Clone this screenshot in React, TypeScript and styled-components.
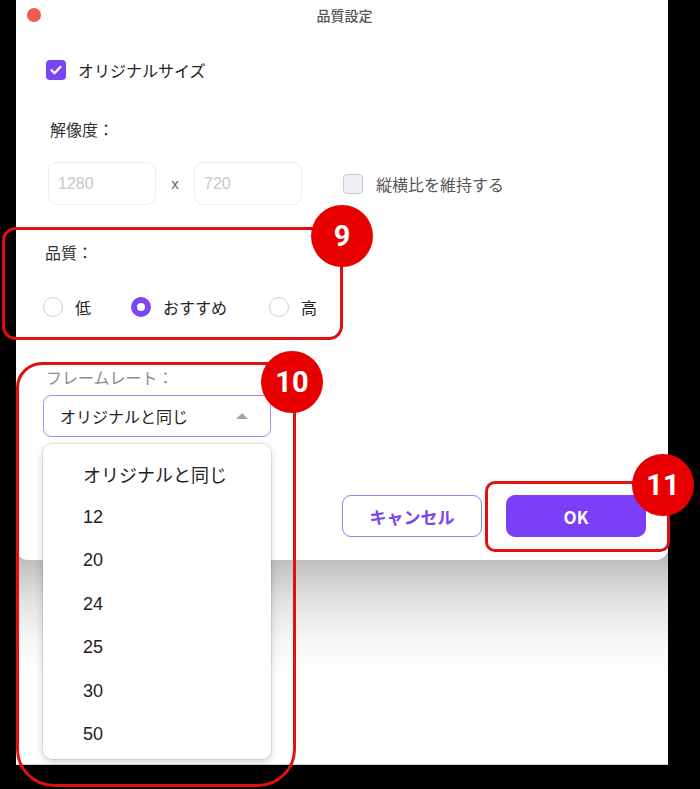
import styled, { createGlobalStyle } from "styled-components";

const GlobalStyle = createGlobalStyle`
  html, body {
    margin: 0;
    padding: 0;
    background: #000;
  }
  body {
    font-family: "Noto Sans CJK JP", "Noto Sans", sans-serif;
    color: #222;
  }
`;

const frameRates = ["オリジナルと同じ", "12", "20", "24", "25", "30", "50"];

type Mark = {
  n: string;
  box: { left: number; top: number; width: number; height: number; radius: string };
  cx: number;
  cy: number;
};

// red callouts drawn over the screenshot
const marks: Mark[] = [
  { n: "9", box: { left: 2, top: 227, width: 341, height: 113, radius: "14px" }, cx: 342, cy: 236 },
  { n: "10", box: { left: 16, top: 362, width: 280, height: 425, radius: "26px 26px 38px 38px" }, cx: 292, cy: 382 },
  { n: "11", box: { left: 485, top: 481, width: 185, height: 71, radius: "10px" }, cx: 663, cy: 485 },
];

const Check = () => (
  <svg width="12" height="10" viewBox="0 0 12 10">
    <path d="M1.5 5.2 L4.6 8.2 L10.5 1.8" fill="none" stroke="#fff" strokeWidth="2.2" strokeLinecap="round" strokeLinejoin="round" />
  </svg>
);

const App: React.FC = () => {
  return (
    <Screen>
      <GlobalStyle />
      <Window>
        <Sheet>
          <TitleBar>
            <TrafficLight />
            <Title>品質設定</Title>
          </TitleBar>

          <CheckRow>
            <CheckBox $checked>
              <Check />
            </CheckBox>
            <span>オリジナルサイズ</span>
          </CheckRow>

          <SectionLabel $top={38} $indent={5}>解像度：</SectionLabel>

          <SizeRow>
            <SizeInput>1280</SizeInput>
            <Times>x</Times>
            <SizeInput>720</SizeInput>
            <AspectRow>
              <CheckBox />
              <span>縦横比を維持する</span>
            </AspectRow>
          </SizeRow>

          <SectionLabel $top={36} $indent={0}>品質：</SectionLabel>

          <RadioRow>
            <RadioItem $width={88}>
              <Radio />
              低
            </RadioItem>
            <RadioItem $width={138}>
              <Radio $on />
              おすすめ
            </RadioItem>
            <RadioItem $width={60}>
              <Radio />
              高
            </RadioItem>
          </RadioRow>

          <SectionLabel $top={48} $indent={1} $muted>フレームレート：</SectionLabel>

          <SelectWrap>
            <Select>
              <span>オリジナルと同じ</span>
              <Caret />
            </Select>
            <Menu>
              {frameRates.map((r) => (
                <MenuItem key={r}>{r}</MenuItem>
              ))}
            </Menu>
          </SelectWrap>

          <Buttons>
            <Button>キャンセル</Button>
            <Button $primary>OK</Button>
          </Buttons>
        </Sheet>
        <Backdrop />
      </Window>

      {marks.map((m) => (
        <div key={m.n}>
          <MarkBox
            style={{
              left: m.box.left,
              top: m.box.top,
              width: m.box.width,
              height: m.box.height,
              borderRadius: m.box.radius,
            }}
          />
          <Badge style={{ left: m.cx - 31, top: m.cy - 31 }}>{m.n}</Badge>
        </div>
      ))}
    </Screen>
  );
};

const Screen = styled.div`
  position: relative;
  width: 700px;
  height: 789px;
  background: #000;
  overflow: hidden;
  padding-left: 16px;
  box-sizing: border-box;
`;

const Window = styled.div`
  width: 652px;
  height: 765px;
  background: #fff;
  display: flex;
  flex-direction: column;
  border-top-left-radius: 6px;
  border-top-right-radius: 6px;
`;

const Sheet = styled.div`
  position: relative;
  z-index: 1;
  height: 560px;
  flex-shrink: 0;
  box-sizing: border-box;
  background: #fff;
  border-radius: 0 0 12px 12px;
  padding: 0 22px 0 27px;
  display: flex;
  flex-direction: column;
`;

const Backdrop = styled.div`
  flex: 1;
  margin-top: -12px;
  padding-top: 12px;
  background: linear-gradient(#b4b4b4 0%, #c4c4c4 8%, #e2e2e2 24%, #f6f6f6 42%, #fff 58%);
  border-bottom: 1px solid #d6d6d6;
`;

const TitleBar = styled.div`
  position: relative;
  height: 30px;
  display: flex;
  align-items: center;
  justify-content: center;
`;

const TrafficLight = styled.span`
  position: absolute;
  left: -16px;
  top: 8px;
  width: 14px;
  height: 14px;
  border-radius: 50%;
  background: #ee5a52;
`;

const Title = styled.div`
  font-size: 14px;
  color: #555;
  font-weight: 500;
`;

const CheckRow = styled.label`
  margin-top: 30px;
  margin-left: 3px;
  display: flex;
  align-items: center;
  gap: 12px;
  font-size: 16px;
  color: #222;
  height: 20px;
`;

const CheckBox = styled.span<{ $checked?: boolean }>`
  width: 20px;
  height: 20px;
  box-sizing: border-box;
  border-radius: 4px;
  display: inline-flex;
  align-items: center;
  justify-content: center;
  background: ${(p) => (p.$checked ? "#7a46f2" : "#eeeef4")};
  border: ${(p) => (p.$checked ? "none" : "1px solid #c9c9cf")};
`;

const SectionLabel = styled.div<{ $top: number; $indent: number; $muted?: boolean }>`
  margin-top: ${(p) => p.$top}px;
  margin-left: ${(p) => p.$indent + 2}px;
  font-size: 16px;
  line-height: 22px;
  color: ${(p) => (p.$muted ? "#8c8c8c" : "#333")};
`;

const SizeRow = styled.div`
  margin-top: 22px;
  margin-left: 5px;
  display: flex;
  align-items: center;
`;

const SizeInput = styled.div`
  width: 108px;
  height: 43px;
  box-sizing: border-box;
  border: 1px solid #ececec;
  border-radius: 9px;
  padding-left: 9px;
  display: flex;
  align-items: center;
  font-family: "Liberation Sans", "Noto Sans", sans-serif;
  font-size: 16px;
  color: #c8c8c8;
`;

const Times = styled.span`
  width: 38px;
  text-align: center;
  font-family: "Liberation Sans", sans-serif;
  font-size: 15px;
  color: #666;
`;

const AspectRow = styled.div`
  margin-left: 41px;
  display: flex;
  align-items: center;
  gap: 13px;
  font-size: 16px;
  color: #555;
`;

const RadioRow = styled.div`
  margin-top: 33px;
  display: flex;
  align-items: center;
  height: 22px;
`;

const RadioItem = styled.label<{ $width: number }>`
  width: ${(p) => p.$width}px;
  display: flex;
  align-items: center;
  gap: 12px;
  font-size: 16px;
  color: #222;
`;

const Radio = styled.span<{ $on?: boolean }>`
  width: 20px;
  height: 20px;
  box-sizing: border-box;
  border-radius: 50%;
  border: ${(p) => (p.$on ? "6px solid #7a46f2" : "1.5px solid #cfcfd4")};
  background: #fff;
`;

const SelectWrap = styled.div`
  position: relative;
  margin-top: 7px;
  width: 228px;
`;

const Select = styled.div`
  height: 42px;
  box-sizing: border-box;
  border: 1.5px solid #a88af5;
  border-radius: 8px;
  padding: 0 22px 0 16px;
  display: flex;
  align-items: center;
  justify-content: space-between;
  font-size: 16px;
  color: #222;
`;

const Caret = styled.span`
  width: 0;
  height: 0;
  border-left: 6px solid transparent;
  border-right: 6px solid transparent;
  border-bottom: 6px solid #a6a6a6;
`;

const Menu = styled.div`
  position: absolute;
  z-index: 3;
  left: 0;
  top: 49px;
  width: 228px;
  height: 315px;
  box-sizing: border-box;
  background: #fff;
  border-radius: 9px;
  box-shadow: 0 0 0 1px rgba(0, 0, 0, 0.08), 0 3px 10px rgba(0, 0, 0, 0.18);
  padding-top: 8px;
  display: flex;
  flex-direction: column;
`;

const MenuItem = styled.div`
  height: 43.5px;
  display: flex;
  align-items: center;
  padding-left: 40px;
  font-family: "Liberation Sans", "Noto Sans CJK JP", sans-serif;
  font-size: 18px;
  color: #222;
`;

const Buttons = styled.div`
  margin-top: 58px;
  display: flex;
  justify-content: flex-end;
  gap: 24px;
`;

const Button = styled.button<{ $primary?: boolean }>`
  width: 140px;
  height: 42px;
  box-sizing: border-box;
  border-radius: 9px;
  font-family: "Noto Sans CJK JP", sans-serif;
  font-size: 17px;
  font-weight: 700;
  cursor: pointer;
  border: 1.5px solid ${(p) => (p.$primary ? "#7b3ff7" : "#9a7cf3")};
  background: ${(p) => (p.$primary ? "#7b3ff7" : "#fff")};
  color: ${(p) => (p.$primary ? "#fff" : "#7a46f2")};
`;

const MarkBox = styled.div`
  position: absolute;
  z-index: 5;
  box-sizing: border-box;
  border: 3px solid #e01010;
  pointer-events: none;
`;

const Badge = styled.div`
  position: absolute;
  z-index: 6;
  width: 62px;
  height: 62px;
  border-radius: 50%;
  background: #e80000;
  color: #fff;
  display: flex;
  align-items: center;
  justify-content: center;
  font-family: "Roboto", "Liberation Sans", sans-serif;
  font-weight: 700;
  font-size: 29px;
`;

export default App;
